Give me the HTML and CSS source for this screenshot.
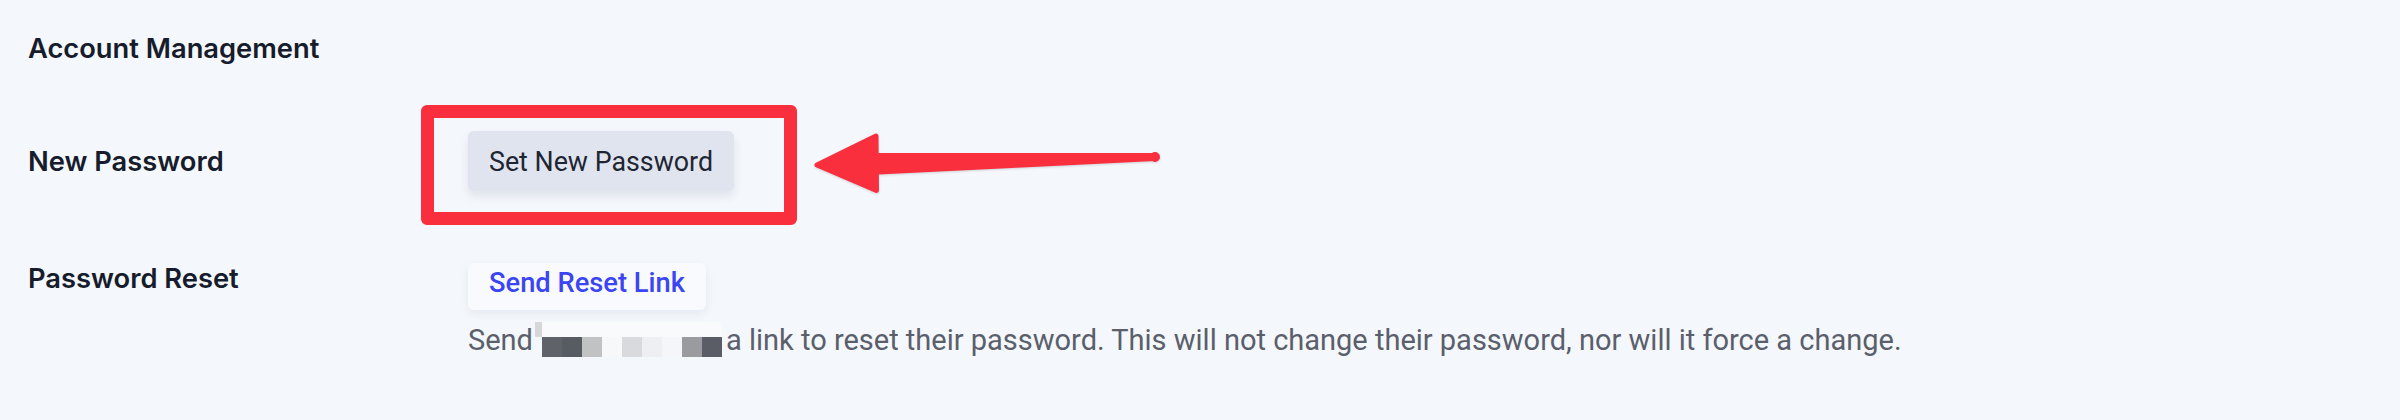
FILE: index.html
```html
<!DOCTYPE html>
<html lang="en">
<head>
<meta charset="utf-8">
<title>Account Management</title>
<link rel="stylesheet" href="styles.css">
</head>
<body>
<main class="panel">
  <h2 class="title">Account Management</h2>
  <div class="rows">
    <div class="row">
      <div class="label">New Password</div>
      <div class="field">
        <button class="btn btn-secondary" type="button">Set New Password</button>
      </div>
    </div>
    <div class="row row-reset">
      <div class="label">Password Reset</div>
      <div class="field">
        <button class="btn btn-white" type="button">Send Reset Link</button>
        <p class="help">Send<span class="redacted"></span>a link to reset their password. This will not change their password, nor will it force a change.</p>
      </div>
    </div>
  </div>
</main>
<div class="annot-box"></div>
<svg class="annot-arrow" viewBox="800 120 370 90" width="370" height="90" aria-hidden="true">
  <g fill="#fa2f3d" stroke="#fa2f3d" stroke-linejoin="round" stroke-width="5">
    <path d="M817 165 L876 136 L876.5 190.5 Z"/>
    <path d="M868 155 L1155 155 L1155 159 L868 173 Z" stroke-width="4"/>
    <circle cx="1155" cy="157" r="2.5"/>
  </g>
</svg>
</body>
</html>
```

FILE: styles.css
```css
* { box-sizing: border-box; }
body {
  margin: 0;
  background: #f4f7fb;
  font-family: Roboto, "Noto Sans", sans-serif;
  color: #1a202c;
}
.panel { padding: 29px 28px 0; }
.title {
  margin: 0;
  font: 600 27.3px/40px Inter, "Noto Sans", sans-serif;
  color: #161c2b;
}
.rows {
  margin-top: 62px;
  display: flex;
  flex-direction: column;
  gap: 61px;
}
.row {
  display: grid;
  grid-template-columns: 440px 1fr;
}
.label {
  padding-top: 11px;
  font: 600 27.3px/40px Inter, "Noto Sans", sans-serif;
  color: #161c2b;
}
.row-reset .label { padding-top: 7px; }
.field {
  display: flex;
  flex-direction: column;
  align-items: flex-start;
}
.btn {
  font: 400 26.8px/40px Roboto, sans-serif;
  padding: 11px 21px 9px;
  border: 0;
  border-radius: 6px;
  cursor: pointer;
}
.btn-secondary {
  background: #dfe4ee;
  color: #1f2633;
  box-shadow: 0 5px 10px rgba(40, 60, 100, 0.10);
}
.btn-white {
  margin-top: 11px;
  padding: 0 21px 7px;
  background: #f8fafd;
  color: #3b45f3;
  font-size: 27.3px;
  font-weight: 500;
  box-shadow: 0 4px 10px rgba(40, 60, 100, 0.07);
}
.help {
  margin: 10px 0 0;
  font: 400 29px/40px Roboto, sans-serif;
  color: #5a5f6b;
  white-space: nowrap;
}
.redacted {
  display: inline-block;
  width: 187px;
  height: 35px;
  margin: 0 4px 0 2px;
  vertical-align: -7px;
  background:
    linear-gradient(#d6d7d9, #d6d7d9) 0 0 / 7px 15px no-repeat,
    linear-gradient(to right,
      #5f6268 0 20px, #575c63 20px 40px, #c0c2c4 40px 60px,
      #f7f8fa 60px 80px, #d8dadd 80px 100px, #eeeff2 100px 120px,
      #f4f6f9 120px 140px, #9a9b9f 140px 160px, #5a5d65 160px 180px) 7px 15px / 180px 20px no-repeat,
    linear-gradient(#f9fafc, #f9fafc) 7px 0 / 180px 15px no-repeat;
}
.annot-box {
  position: absolute;
  left: 421px;
  top: 105px;
  width: 376px;
  height: 120px;
  border: 13px solid #fa2f3d;
  border-radius: 6px;
}
.annot-arrow {
  position: absolute;
  left: 800px;
  top: 120px;
  filter: drop-shadow(0 1px 1px rgba(0, 0, 0, 0.15));
}
```
